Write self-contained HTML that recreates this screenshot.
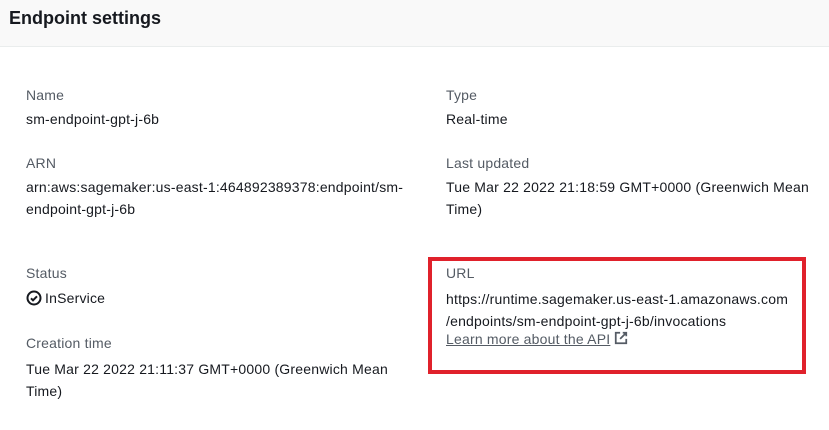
<!DOCTYPE html><html><head><style>
body{margin:0;width:829px;height:430px;background:#fff;font-family:"Liberation Sans",sans-serif;position:relative;overflow:hidden;color:#16191f}
.hd{position:absolute;left:0;top:0;width:829px;height:46px;background:#f9f9f9;border-bottom:1px solid #eaeded}
.hd h2{margin:0;position:absolute;left:9px;top:8px;font-size:18px;font-weight:bold;color:#16191f}
.t{position:absolute;font-size:14px;line-height:22px;white-space:nowrap;letter-spacing:0.2px}
.l{color:#545b64}
.box{position:absolute;left:428px;top:257px;width:370px;height:109px;border:4px solid #e0212b}
a{color:#545b64;text-decoration:underline}
</style></head><body>
<div class="hd"><h2>Endpoint settings</h2></div>
<div class="t l" style="left:26px;top:84px">Name</div>
<div class="t" style="left:26px;top:108px">sm-endpoint-gpt-j-6b</div>
<div class="t l" style="left:26px;top:152px">ARN</div>
<div class="t" style="left:26px;top:176px">arn:aws:sagemaker:us-east-1:464892389378:endpoint/sm-<br>endpoint-gpt-j-6b</div>
<div class="t l" style="left:26px;top:262px">Status</div>
<div class="t" style="left:26px;top:287px;color:#16191f"><svg width="16" height="16" viewBox="0 0 16 16" style="vertical-align:-3px;margin-right:3px"><circle cx="8" cy="8" r="6.5" fill="none" stroke="#16191f" stroke-width="2"/><path d="M5 8.3l2 2 4-4" fill="none" stroke="#16191f" stroke-width="2"/></svg>InService</div>
<div class="t l" style="left:26px;top:332px">Creation time</div>
<div class="t" style="left:26px;top:358px">Tue Mar 22 2022 21:11:37 GMT+0000 (Greenwich Mean<br>Time)</div>
<div class="t l" style="left:446px;top:84px">Type</div>
<div class="t" style="left:446px;top:108px">Real-time</div>
<div class="t l" style="left:446px;top:152px">Last updated</div>
<div class="t" style="left:446px;top:176px">Tue Mar 22 2022 21:18:59 GMT+0000 (Greenwich Mean<br>Time)</div>
<div class="box"></div>
<div class="t l" style="left:446px;top:262px">URL</div>
<div class="t" style="left:446px;top:288px">https://runtime.sagemaker.us-east-1.amazonaws.com<br>/endpoints/sm-endpoint-gpt-j-6b/invocations</div>
<div class="t" style="left:446px;top:328px"><a>Learn more about the API</a> <svg width="14" height="14" viewBox="0 0 16 16" style="vertical-align:-1px"><path d="M7 2H2v12h12V9M10 2h4v4M14 2L7 9" fill="none" stroke="#545b64" stroke-width="2"/></svg></div>
</body></html>
